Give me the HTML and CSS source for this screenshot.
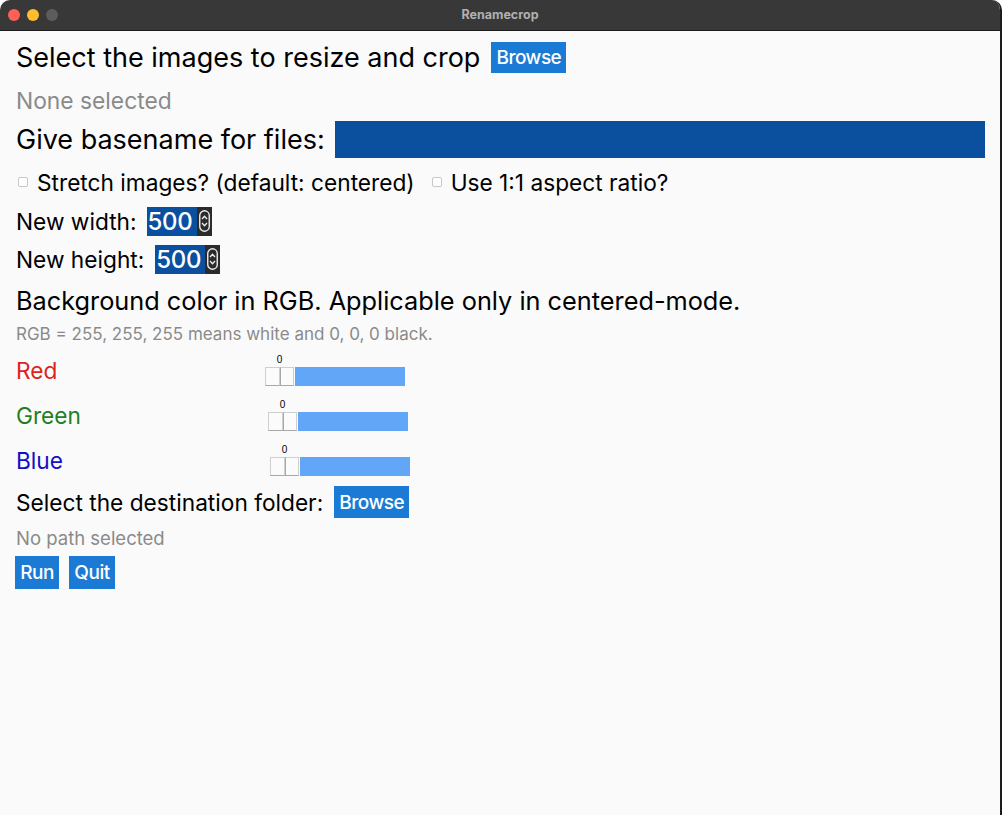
FILE: index.html
```html
<!DOCTYPE html>
<html>
<head>
<meta charset="utf-8">
<link rel="stylesheet" href="styles.css">
</head>
<body>
<div class="window">
  <div class="titlebar">
    <div class="lights">
      <span class="light red"></span>
      <span class="light yellow"></span>
      <span class="light gray"></span>
    </div>
    <div class="title">Renamecrop</div>
  </div>
  <div class="content">
    <div class="row r1">
      <span class="big">Select the images to resize and crop</span>
      <button class="btn btn-browse1">Browse</button>
    </div>
    <div class="row r2"><span class="muted">None selected</span></div>
    <div class="row r3">
      <span class="big">Give basename for files:</span>
      <div class="textinput"></div>
    </div>
    <div class="row r4">
      <span class="check"></span><span class="med">Stretch images? (default: centered)</span>
      <span class="check c2"></span><span class="med">Use 1:1 aspect ratio?</span>
    </div>
    <div class="row r5">
      <span class="med">New width:</span>
      <div class="spin sw"><span class="spin-val">500</span><span class="spin-ctl"><svg width="11" height="22" viewBox="0 0 11 22"><rect x="0.75" y="0.75" width="9.5" height="20.5" rx="4.75" fill="none" stroke="#ececec" stroke-width="1.4"/><path d="M3 9 L5.5 6.2 L8 9" fill="none" stroke="#ececec" stroke-width="1.3"/><path d="M3 13 L5.5 15.8 L8 13" fill="none" stroke="#ececec" stroke-width="1.3"/></svg></span></div>
    </div>
    <div class="row r6">
      <span class="med">New height:</span>
      <div class="spin sh"><span class="spin-val">500</span><span class="spin-ctl"><svg width="11" height="22" viewBox="0 0 11 22"><rect x="0.75" y="0.75" width="9.5" height="20.5" rx="4.75" fill="none" stroke="#ececec" stroke-width="1.4"/><path d="M3 9 L5.5 6.2 L8 9" fill="none" stroke="#ececec" stroke-width="1.3"/><path d="M3 13 L5.5 15.8 L8 13" fill="none" stroke="#ececec" stroke-width="1.3"/></svg></span></div>
    </div>
    <div class="row r7"><span class="heading">Background color in RGB. Applicable only in centered-mode.</span></div>
    <div class="row r8"><span class="small">RGB = 255, 255, 255 means white and 0, 0, 0 black.</span></div>
    <div class="row rgb">
      <span class="clabel cred">Red</span>
      <div class="slider s-red">
        <span class="sval">0</span>
        <div class="track"><span class="knob"></span><span class="knob"></span><span class="fill"></span></div>
      </div>
    </div>
    <div class="row rgb">
      <span class="clabel cgreen">Green</span>
      <div class="slider s-green">
        <span class="sval">0</span>
        <div class="track"><span class="knob"></span><span class="knob"></span><span class="fill"></span></div>
      </div>
    </div>
    <div class="row rgb">
      <span class="clabel cblue">Blue</span>
      <div class="slider s-blue">
        <span class="sval">0</span>
        <div class="track"><span class="knob"></span><span class="knob"></span><span class="fill"></span></div>
      </div>
    </div>
    <div class="row r-dest">
      <span class="med">Select the destination folder:</span>
      <button class="btn btn-browse2">Browse</button>
    </div>
    <div class="row r-path"><span class="muted2">No path selected</span></div>
    <div class="row r-run">
      <button class="btn btn-run">Run</button>
      <button class="btn btn-quit">Quit</button>
    </div>
  </div>
</div>
</body>
</html>
```

FILE: styles.css
```css
* { box-sizing: border-box; }
html, body { margin: 0; padding: 0; }
body {
  width: 1002px;
  height: 815px;
  background: #ffffff;
  font-family: "Inter", "Liberation Sans", sans-serif;
  overflow: hidden;
}
.window {
  width: 1002px;
  height: 815px;
  background: #fafafa;
  border-right: 2px solid #1c1c1c;
  border-radius: 10px 10px 0 0;
  overflow: hidden;
  display: flex;
  flex-direction: column;
}
.titlebar {
  height: 31px;
  background: #383838;
  border-bottom: 1px solid #1a1a1a;
  display: flex;
  align-items: center;
  position: relative;
  flex: none;
}
.lights {
  display: flex;
  gap: 7px;
  padding-left: 8px;
}
.light {
  width: 12px;
  height: 12px;
  border-radius: 50%;
  display: block;
}
.light.red { background: #fe5f57; }
.light.yellow { background: #febc2e; }
.light.gray { background: #5c5c5c; }
.title {
  position: absolute;
  left: 0;
  right: 0;
  top: 0;
  line-height: 30px;
  text-align: center;
  color: #b0b0b0;
  font-weight: 700;
  font-size: 12.5px;
}
.content {
  padding-left: 16px;
  padding-top: 7px;
  display: flex;
  flex-direction: column;
}
.row {
  display: flex;
  align-items: center;
  white-space: nowrap;
}
.big { font-size: 27px; color: #000; }
.med { font-size: 22.7px; color: #000; }
.heading { font-size: 25.3px; color: #000; }
.muted { font-size: 22.8px; color: #8a8a8a; }
.muted2 { font-size: 18.5px; color: #8a8a8a; }
.small { font-size: 17px; color: #8a8a8a; line-height: 16px; }

.r1 { height: 38px; }
.r2 { height: 44px; padding-top: 4px; }
.r3 { height: 38px; }
.r4 { height: 48px; }
.r5 { height: 30px; }
.r6 { height: 30px; margin-top: 8px; }
.r7 { height: 52px; }
.r8 { height: 22px; align-items: flex-start; }
.rgb { height: 45px; }
.r-dest { height: 38px; }
.r-path { height: 34px; }
.r-run { height: 35px; }

.btn {
  border: none;
  background: #1b7bd4;
  color: #fff;
  font-family: "Inter", "Liberation Sans", sans-serif;
  font-size: 19px;
  font-weight: 500;
  letter-spacing: -0.5px;
  padding: 0;
  height: 31px;
  display: flex;
  align-items: center;
  justify-content: center;
}
.btn-browse1 { width: 75px; margin-left: 11px; }
.btn-browse2 { width: 75px; margin-left: 11px; height: 32px; }
.btn-run { width: 44px; height: 33px; margin-left: -1px; }
.btn-quit { width: 46px; height: 33px; margin-left: 10px; }

.textinput {
  width: 650px;
  height: 37px;
  background: #0b4f9f;
  margin-left: 10px;
}

.check {
  width: 10px;
  height: 10px;
  border: 1px solid #c8c8c8;
  border-radius: 2px;
  background: #fff;
  margin-left: 2px;
  margin-right: 9px;
}
.check.c2 { margin-left: 17px; }

.spin {
  height: 29px;
  display: flex;
  margin-left: 10px;
}
.spin.sh { margin-left: 11px; }
.spin-val {
  width: 50px;
  background: #0b4f9f;
  color: #fff;
  font-size: 24px;
  font-weight: 500;
  line-height: 29px;
  padding-left: 1px;
  letter-spacing: -0.3px;
}
.spin-ctl {
  width: 15px;
  background: #2b2b2b;
  display: flex;
  align-items: center;
  justify-content: center;
}
.spin-ctl svg { display: block; }

.clabel { font-size: 22.7px; width: 249px; }
.cred { color: #e0221c; }
.cgreen { color: #1f7f1f; }
.cblue { color: #1010c4; }

.slider {
  display: flex;
  flex-direction: column;
  width: 140px;
}
.s-red { margin-left: 0; }
.s-green { margin-left: 3px; }
.s-blue { margin-left: 5px; }
.sval {
  font-family: "Liberation Sans", sans-serif;
  font-size: 10px;
  height: 12px;
  line-height: 10px;
  width: 29px;
  text-align: center;
  color: #000;
}
.track {
  height: 19px;
  display: flex;
}
.knob {
  width: 15px;
  height: 19px;
  background: #fbfbfb;
  border: 1px solid #cfcfcf;
  border-bottom-color: #a8a8a8;
}
.knob + .knob { width: 14px; border-left: 1px solid #a8a8a8; }
.fill {
  flex: 1;
  margin-left: 1px;
  background: #62a6f8;
}
```
